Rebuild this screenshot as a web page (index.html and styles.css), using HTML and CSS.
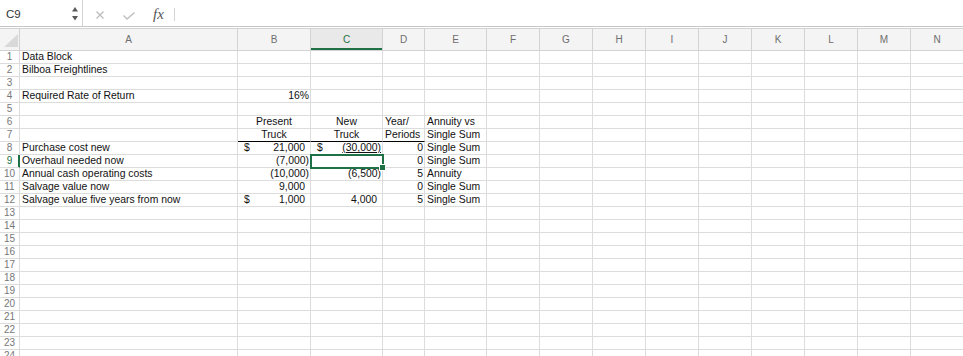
FILE: index.html
```html
<!DOCTYPE html>
<html lang="en">
<head>
    <meta charset="UTF-8">
    <title>Bilboa Freightlines</title>
    <link rel="stylesheet" href="styles.css">
</head>
<body>
    <div class="toolbar">
        <div class="namebox">
            <span>C9</span>
            <svg class="spin" width="6" height="14" viewBox="0 0 6 14">
                <polygon points="3,0 6,4.5 0,4.5" fill="#5a5a5a"/>
                <polygon points="0,9 6,9 3,13.5" fill="#5a5a5a"/>
            </svg>
        </div>
        <svg class="ico-x" width="8" height="8" viewBox="0 0 8 8">
            <path d="M0.5 0.5 L7.5 7.5 M7.5 0.5 L0.5 7.5" stroke="#bdbdbd" stroke-width="1.3" fill="none"/>
        </svg>
        <svg class="ico-ok" width="12" height="8" viewBox="0 0 12 8">
            <path d="M0.5 3.5 L4 7 L11.5 0.5" stroke="#bdbdbd" stroke-width="1.3" fill="none"/>
        </svg>
        <span class="fx">fx</span>
        <span class="bar-sep"></span>
        <div class="formula"></div>
    </div>

    <div class="sheet">
        <div class="row head">
            <div class="corner">
                <svg width="14" height="13" viewBox="0 0 14 13"><polygon points="14,0 14,13 0,13" fill="#d9d9d9"/></svg>
            </div>
            <div>A</div><div>B</div><div class="on">C</div><div>D</div><div>E</div>
            <div>F</div><div>G</div><div>H</div><div>I</div><div>J</div><div>K</div><div>L</div><div>M</div><div>N</div>
        </div>

        <div class="row"><div class="rh">1</div><div>Data Block</div><div></div><div></div><div></div><div></div><div class="rest"></div></div>
        <div class="row"><div class="rh">2</div><div>Bilboa Freightlines</div><div></div><div></div><div></div><div></div><div class="rest"></div></div>
        <div class="row"><div class="rh">3</div><div></div><div></div><div></div><div></div><div></div><div class="rest"></div></div>
        <div class="row"><div class="rh">4</div><div>Required Rate of Return</div><div class="r">16%</div><div></div><div></div><div></div><div class="rest"></div></div>
        <div class="row"><div class="rh">5</div><div></div><div></div><div></div><div></div><div></div><div class="rest"></div></div>
        <div class="row"><div class="rh">6</div><div></div><div class="c">Present</div><div class="c">New</div><div>Year/</div><div>Annuity vs</div><div class="rest"></div></div>
        <div class="row"><div class="rh">7</div><div></div><div class="c line">Truck</div><div class="c line">Truck</div><div class="line">Periods</div><div>Single Sum</div><div class="rest"></div></div>
        <div class="row"><div class="rh">8</div><div>Purchase cost new</div><div class="acct"><span>$</span><span class="pos">21,000</span></div><div class="acct"><span>$</span><u>(30,000)</u></div><div class="r">0</div><div>Single Sum</div><div class="rest"></div></div>
        <div class="row"><div class="rh active">9</div><div>Overhaul needed now</div><div class="r">(7,000)</div><div class="sel"><div class="cursor"><span class="handle"></span></div></div><div class="r">0</div><div>Single Sum</div><div class="rest"></div></div>
        <div class="row"><div class="rh">10</div><div>Annual cash operating costs</div><div class="r">(10,000)</div><div class="r">(6,500)</div><div class="r">5</div><div>Annuity</div><div class="rest"></div></div>
        <div class="row"><div class="rh">11</div><div>Salvage value now</div><div class="r"><span class="pos">9,000</span></div><div></div><div class="r">0</div><div>Single Sum</div><div class="rest"></div></div>
        <div class="row"><div class="rh">12</div><div>Salvage value five years from now</div><div class="acct"><span>$</span><span class="pos">1,000</span></div><div class="r"><span class="pos">4,000</span></div><div class="r">5</div><div>Single Sum</div><div class="rest"></div></div>
        <div class="row"><div class="rh">13</div><div></div><div></div><div></div><div></div><div></div><div class="rest"></div></div>
        <div class="row"><div class="rh">14</div><div></div><div></div><div></div><div></div><div></div><div class="rest"></div></div>
        <div class="row"><div class="rh">15</div><div></div><div></div><div></div><div></div><div></div><div class="rest"></div></div>
        <div class="row"><div class="rh">16</div><div></div><div></div><div></div><div></div><div></div><div class="rest"></div></div>
        <div class="row"><div class="rh">17</div><div></div><div></div><div></div><div></div><div></div><div class="rest"></div></div>
        <div class="row"><div class="rh">18</div><div></div><div></div><div></div><div></div><div></div><div class="rest"></div></div>
        <div class="row"><div class="rh">19</div><div></div><div></div><div></div><div></div><div></div><div class="rest"></div></div>
        <div class="row"><div class="rh">20</div><div></div><div></div><div></div><div></div><div></div><div class="rest"></div></div>
        <div class="row"><div class="rh">21</div><div></div><div></div><div></div><div></div><div></div><div class="rest"></div></div>
        <div class="row"><div class="rh">22</div><div></div><div></div><div></div><div></div><div></div><div class="rest"></div></div>
        <div class="row"><div class="rh">23</div><div></div><div></div><div></div><div></div><div></div><div class="rest"></div></div>
        <div class="row"><div class="rh">24</div><div></div><div></div><div></div><div></div><div></div><div class="rest"></div></div>
    </div>
</body>
</html>
```

FILE: styles.css
```css
body {
    margin: 0;
    font-family: "Liberation Sans", Arial, sans-serif;
    background-color: #fff;
    overflow: hidden;
}
.toolbar {
    display: flex;
    align-items: center;
    height: 27px;
    box-sizing: border-box;
    border-bottom: 1px solid #c6c6c6;
}
.namebox {
    position: relative;
    display: flex;
    align-items: center;
    justify-content: space-between;
    width: 83px;
    height: 100%;
    box-sizing: border-box;
    padding: 2px 4px 0 6px;
    border-right: 1px solid #d4d4d4;
    font-size: 11.5px;
    color: #333;
}
.spin {
    margin-top: -1px;
}
.ico-x {
    margin-left: 13px;
    margin-top: 4px;
}
.ico-ok {
    margin-left: 19px;
    margin-top: 5px;
}
.fx {
    margin-left: 18px;
    margin-top: 2px;
    font-family: "Liberation Serif", "Times New Roman", serif;
    font-style: italic;
    font-size: 15px;
    color: #555;
}
.bar-sep {
    width: 1px;
    height: 13px;
    margin-left: 10px;
    margin-top: 3px;
    background-color: #d4d4d4;
}
.formula {
    flex: 1;
}
.sheet {
    margin-top: 1px;
    border-top: 1px solid #d2d2d2;
}
.row {
    display: grid;
    grid-template-columns: 20px 218px 73px 72px 42px 62px 477px;
    height: 13px;
}
.row > div {
    box-sizing: border-box;
    border-right: 1px solid #dcdcdc;
    border-bottom: 1px solid #dcdcdc;
    padding: 0 2px;
    font-size: 10.4px;
    line-height: 12px;
    color: #111;
    white-space: nowrap;
}
.row > .rh {
    padding: 0;
    text-align: center;
    font-size: 10px;
    color: #777;
}
.row > .rh.active {
    color: #1e7145;
    border-right-color: #1e7145;
    box-shadow: inset -1px 0 0 #1e7145;
}
.row > .rest {
    border-right: none;
    background: repeating-linear-gradient(to right, transparent 0 52px, #dcdcdc 52px 53px);
}
.row.head {
    height: 22px;
    grid-template-columns: 20px 218px 73px 72px 42px 62px repeat(9, 53px);
}
.row.head > div {
    background-color: #f4f4f4;
    border-color: #d2d2d2;
    text-align: center;
    font-size: 10px;
    line-height: 21px;
    color: #6e6e6e;
}
.row.head > .on {
    background-color: #e9e9e9;
    color: #1e7145;
    box-shadow: inset 0 -2px 0 #1e7145;
}
.row.head > .corner {
    padding: 5px 0 0 3px;
    line-height: 0;
}
.row > .r {
    text-align: right;
    padding-right: 1px;
}
.row > .c {
    text-align: center;
}
.row > .line {
    border-bottom-color: #000;
}
.row > .acct {
    display: flex;
    justify-content: space-between;
    padding: 0 1px 0 6px;
}
.pos {
    padding-right: 4px;
}
.row > .sel {
    position: relative;
}
.cursor {
    position: absolute;
    left: -1px;
    top: -1px;
    right: -2px;
    bottom: -2px;
    border: 2px solid #1e7145;
}
.handle {
    position: absolute;
    right: -4px;
    bottom: -4px;
    width: 5px;
    height: 5px;
    background-color: #1e7145;
    border: 1px solid #fff;
}
```
